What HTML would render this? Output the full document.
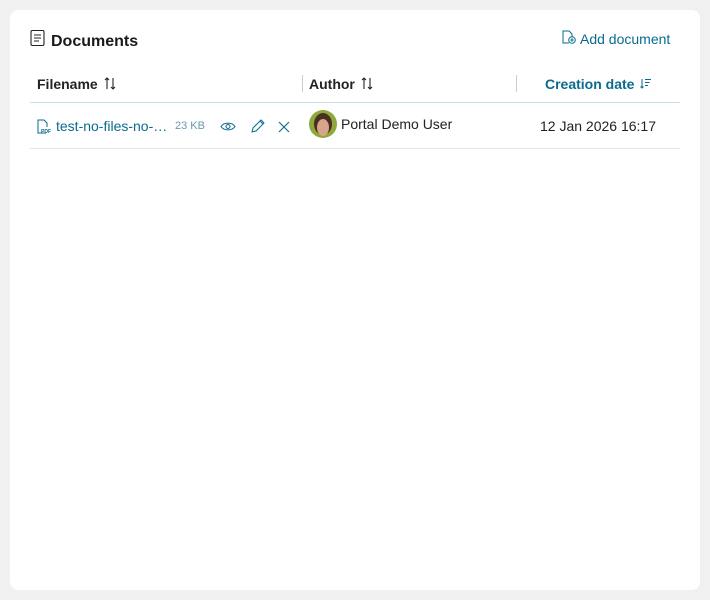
<!DOCTYPE html>
<html><head><style>
body{margin:0;background:#f0f0f0;font-family:"Liberation Sans",sans-serif;width:710px;height:600px;position:relative;overflow:hidden}
.card{position:absolute;left:10px;top:10px;width:690px;height:580px;background:#fff;border-radius:8px}
.a{position:absolute;white-space:nowrap}
.blue{color:#0a6b8f}
</style></head><body>
<div class="card"></div>
<svg class="a" style="left:30px;top:30px" width="16" height="17" viewBox="0 0 16 17"><rect x="1" y="0.5" width="13" height="15" rx="1.5" fill="none" stroke="#222" stroke-width="1.1"/><path d="M4 5h7M4 8h7M4 11h5" stroke="#222" stroke-width="1.1"/></svg>
<div class="a" style="left:51px;top:33px;font-size:16px;font-weight:bold;color:#1a1a1a">Documents</div>
<svg class="a" style="left:561px;top:30px" width="16" height="15" viewBox="0 0 16 15"><path d="M8 13H2V1h6l3 3v3" fill="none" stroke="#0a6b8f" stroke-width="1"/><circle cx="11" cy="10" r="3.3" fill="none" stroke="#0a6b8f"/><path d="M11 8.3v3.4M9.3 10h3.4" stroke="#0a6b8f"/></svg>
<div class="a blue" style="left:580px;top:31px;font-size:14px">Add document</div>
<div class="a" style="left:37px;top:76px;font-size:14px;font-weight:bold;color:#222">Filename</div>
<svg class="a" style="left:104px;top:77px" width="12" height="13" viewBox="0 0 12 13"><path d="M3 12V1M1 3l2-2 2 2M9 1v11M7 10l2 2 2-2" fill="none" stroke="#222" stroke-width="1.1"/></svg>
<div class="a" style="left:302px;top:75px;width:1px;height:17px;background:#ccc"></div>
<div class="a" style="left:309px;top:76px;font-size:14px;font-weight:bold;color:#222">Author</div>
<svg class="a" style="left:361px;top:77px" width="12" height="13" viewBox="0 0 12 13"><path d="M3 12V1M1 3l2-2 2 2M9 1v11M7 10l2 2 2-2" fill="none" stroke="#222" stroke-width="1.1"/></svg>
<div class="a" style="left:516px;top:75px;width:1px;height:17px;background:#ccc"></div>
<div class="a blue" style="left:545px;top:76px;font-size:14px;font-weight:bold">Creation date</div>
<svg class="a" style="left:640px;top:78px" width="12" height="11" viewBox="0 0 12 11"><path d="M2 1v9M0.5 8.5L2 10l1.5-1.5M5 1.5h6M5 4.5h4.5M5 7.5h3" fill="none" stroke="#0a6b8f" stroke-width="1"/></svg>
<div class="a" style="left:30px;top:102px;width:650px;height:1px;background:#c7e0ea"></div>
<svg class="a" style="left:37px;top:119px" width="14" height="15" viewBox="0 0 14 15"><path d="M9 14H1V1h6l3 3v4" fill="none" stroke="#0a6b8f"/><text x="4" y="14" font-size="5" fill="#0a6b8f" font-family="Liberation Sans" font-weight="bold">PDF</text></svg>
<div class="a blue" style="left:56px;top:118px;font-size:14px">test-no-files-no-…</div>
<div class="a" style="left:175px;top:120px;font-size:11px;color:#6a9aac">23 KB</div>
<svg class="a" style="left:220px;top:121px" width="16" height="11" viewBox="0 0 16 11"><path d="M1 5.5C4 1 12 1 15 5.5C12 10 4 10 1 5.5Z" fill="none" stroke="#0a6b8f"/><circle cx="8" cy="5.5" r="2" fill="none" stroke="#0a6b8f"/></svg>
<svg class="a" style="left:250px;top:118px" width="16" height="16" viewBox="0 0 16 16"><path d="M2 14l1-4 8-8 3 3-8 8z M10 3l3 3" fill="none" stroke="#0a6b8f"/></svg>
<svg class="a" style="left:278px;top:121px" width="12" height="12" viewBox="0 0 12 12"><path d="M1 1l10 10M11 1L1 11" stroke="#0a6b8f" stroke-width="1.1"/></svg>
<div class="a" style="left:309px;top:110px;width:28px;height:28px;border-radius:50%;background:#8fa83a;overflow:hidden"><div style="position:absolute;left:5px;top:3px;width:18px;height:22px;border-radius:50%;background:#4a2e22"></div><div style="position:absolute;left:8px;top:9px;width:12px;height:17px;border-radius:50%;background:#d9a58a"></div></div>
<div class="a" style="left:341px;top:116px;font-size:14px;color:#222">Portal Demo User</div>
<div class="a" style="left:540px;top:118px;font-size:14px;color:#222">12 Jan 2026 16:17</div>
<div class="a" style="left:30px;top:148px;width:650px;height:1px;background:#e6e6e6"></div>
</body></html>
